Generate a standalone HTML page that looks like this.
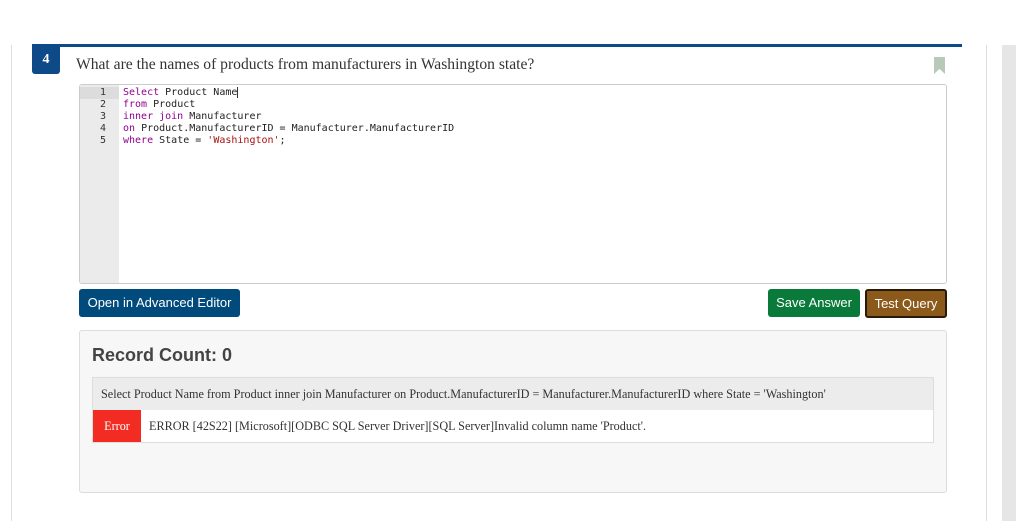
<!DOCTYPE html>
<html><head><style>
body{margin:0;width:1016px;height:521px;background:#fff;position:relative;overflow:hidden;font-family:"Liberation Sans",sans-serif}
.a{position:absolute}
.mono{font-family:"DejaVu Sans Mono","Liberation Mono",monospace;font-size:10px;line-height:12px}
.k{color:#900090}.s{color:#a11}
</style></head><body>
<div class="a" style="left:11px;top:45px;width:1px;height:476px;background:#ddd"></div>
<div class="a" style="left:986px;top:45px;width:1px;height:476px;background:#ddd"></div>
<div class="a" style="left:1002px;top:45px;width:14px;height:476px;background:#e6e6e6"></div>
<div class="a" style="left:32px;top:44px;width:930px;height:3px;background:#0d4a87"></div>
<div class="a" style="left:32px;top:46px;width:28px;height:28px;background:#0d4a87;border-radius:0 0 3px 3px;color:#fff;font:bold 14px 'Liberation Serif',serif;text-align:center;line-height:28px">4</div>
<div class="a" style="left:76px;top:56px;font:15.6px 'Liberation Serif',serif;color:#333">What are the names of products from manufacturers in Washington state?</div>
<svg class="a" style="left:934px;top:57px" width="11" height="17"><path d="M0 0H11V17L5.5 12L0 17Z" fill="#b8c9b8"/></svg>
<div class="a" style="left:79px;top:84px;width:866px;height:198px;border:1px solid #ccc;border-radius:3px;overflow:hidden">
 <div class="a" style="left:0;top:0;width:39px;height:198px;background:#ebebeb"></div>
 <div class="a" style="left:0;top:2px;width:39px;height:12px;background:#dcdcdc"></div>
 <div class="a mono" style="left:0;top:2px;width:26px;text-align:right;color:#333">1<br>2<br>3<br>4<br>5</div>
 <div class="a mono" style="left:43px;top:2px;color:#222;white-space:pre"><span class="k">Select</span> Product Name<span style="border-left:1px solid #333"></span>
<span class="k">from</span> Product
<span class="k">inner join</span> Manufacturer
<span class="k">on</span> Product.ManufacturerID = Manufacturer.ManufacturerID
<span class="k">where</span> State = <span class="s">'Washington'</span>;</div>
</div>
<div class="a" style="left:79px;top:289px;width:161px;height:28px;background:#004a7c;border-radius:3px;color:#fff;font-size:13px;line-height:28px;text-align:center">Open in Advanced Editor</div>
<div class="a" style="left:768px;top:289px;width:92px;height:28px;background:#0a7a3a;border-radius:3px;color:#fff;font-size:13px;line-height:28px;text-align:center">Save Answer</div>
<div class="a" style="left:865px;top:289px;width:78px;height:25px;background:#8b5a1a;border:2px solid #2a1a0a;border-radius:3px;color:#fff;font-size:13px;line-height:25px;text-align:center">Test Query</div>
<div class="a" style="left:79px;top:330px;width:866px;height:161px;background:#f7f7f7;border:1px solid #ddd;border-radius:3px"></div>
<div class="a" style="left:92px;top:345px;font:bold 18px 'Liberation Sans',sans-serif;color:#444">Record Count: 0</div>
<div class="a" style="left:92px;top:377px;width:840px;height:32px;background:#ececec;border:1px solid #ddd;font:12.2px 'Liberation Serif',serif;color:#333;line-height:32px;text-indent:8px;white-space:nowrap;overflow:hidden">Select Product Name from Product inner join Manufacturer on Product.ManufacturerID = Manufacturer.ManufacturerID where State = 'Washington'</div>
<div class="a" style="left:92px;top:410px;width:840px;height:32px;background:#fff;border:1px solid #ddd;border-top:0;font:12.2px 'Liberation Serif',serif;color:#333;line-height:32px;white-space:nowrap">
 <span style="display:inline-block;width:48px;background:#f22c22;color:#fff;text-align:center">Error</span><span style="padding-left:8px">ERROR [42S22] [Microsoft][ODBC SQL Server Driver][SQL Server]Invalid column name 'Product'.</span></div>
</body></html>
